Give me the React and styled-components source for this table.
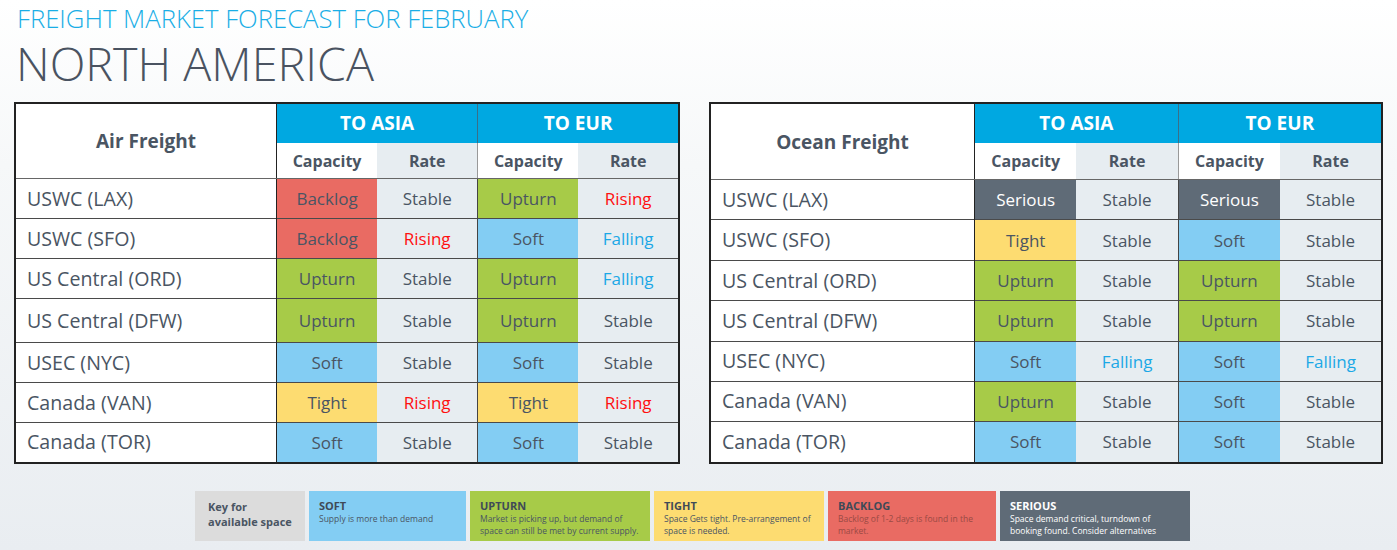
import React from 'react';
import styled, { createGlobalStyle } from 'styled-components';

const GlobalStyle = createGlobalStyle`
  html, body {
    margin: 0;
    padding: 0;
  }
  body {
    width: 1397px;
    height: 550px;
    overflow: hidden;
    font-family: "Open Sans", "Liberation Sans", sans-serif;
    background: linear-gradient(180deg, #ffffff 0%, #f6f8f9 30%, #e9edf1 100%);
  }
`;

const COLORS = {
  Soft: '#83cdf3',
  Upturn: '#a7cb48',
  Tight: '#fddc71',
  Backlog: '#e96b63',
  Serious: '#5f6b77',
};

const RATE_COLORS = {
  Stable: '#4a5563',
  Rising: '#ff1010',
  Falling: '#1ca8e6',
};

const Page = styled.div`
  padding: 4px 0 0 14px;
  color: #4a5563;
`;

const Kicker = styled.div`
  font-size: 25.7px;
  font-weight: 300;
  line-height: 30px;
  color: #1aaee6;
  padding-left: 3px;
`;

const Title = styled.h1`
  margin: 0;
  font-size: 46.7px;
  font-weight: 300;
  line-height: 58px;
  color: #4a5361;
  padding-left: 2px;
`;

const Tables = styled.div`
  display: flex;
  gap: 29px;
  margin-top: 10px;
`;

const Table = styled.table`
  border-collapse: collapse;
  width: ${(p) => p.$width}px;
  border: 2px solid #222;
  table-layout: fixed;
  background: #fff;
`;

const LabelHead = styled.th`
  width: ${(p) => p.$width}px;
  font-size: 19px;
  font-weight: 700;
  color: #4a5563;
  border-right: 1.5px solid #222;
  border-bottom: 1px solid #666;
  text-align: center;
`;

const GroupHead = styled.th`
  background: #00a8e1;
  color: #fff;
  font-size: 19px;
  font-weight: 700;
  height: 39px;
  line-height: 1;
  padding: 0;
  border-left: ${(p) => (p.$first ? 'none' : '1px solid #3a6f88')};
`;

const SubHead = styled.th`
  height: ${(p) => p.$h}px;
  line-height: 1;
  padding: 0;
  font-size: 16px;
  font-weight: 700;
  color: #4a5563;
  background: ${(p) => (p.$rate ? '#e7edf1' : '#ffffff')};
  border-bottom: 1px solid #666;
  border-left: ${(p) => (p.$divider ? '1px solid #999' : 'none')};
`;

const Row = styled.tr`
  height: ${(p) => p.$h}px;
  border-top: 1px solid #4a4a4a;
`;

const Label = styled.td`
  font-size: 19.6px;
  line-height: 1;
  color: #4a5563;
  padding: 0 0 0 11px;
  border-right: 1.5px solid #222;
  white-space: nowrap;
`;

const Cell = styled.td`
  padding: 0;
  line-height: 1;
  text-align: center;
  font-size: 17px;
  background: ${(p) => p.$bg};
  color: ${(p) => p.$color};
  border-left: ${(p) => (p.$divider ? '1px solid #444' : 'none')};
`;

const Legend = styled.div`
  display: flex;
  gap: 4px;
  margin: 27px 0 0 181px;
`;

const KeyBox = styled.div`
  width: 110px;
  height: 50px;
  box-sizing: border-box;
  background: #dcdcdc;
  padding: 8px 0 0 13px;
  font-size: 11px;
  font-weight: 700;
  line-height: 15px;
  color: #4a5563;
`;

const LegendItem = styled.div`
  width: ${(p) => p.$width}px;
  height: 50px;
  box-sizing: border-box;
  background: ${(p) => p.$bg};
  padding: 8px 0 0 10px;
  color: ${(p) => (p.$dark ? '#ffffff' : '#4a5563')};
`;

const LegendTitle = styled.div`
  font-size: 11px;
  font-weight: 700;
  line-height: 13px;
  color: ${(p) => (p.$dark ? '#ffffff' : '#3f4a57')};
`;

const LegendText = styled.div`
  font-size: 8.5px;
  line-height: 12px;
  margin-top: 1px;
  color: ${(p) => (p.$muted ? '#9a4a44' : 'inherit')};
`;

const airRows = [
  ['USWC (LAX)', 'Backlog', 'Stable', 'Upturn', 'Rising', 40],
  ['USWC (SFO)', 'Backlog', 'Rising', 'Soft', 'Falling', 40],
  ['US Central (ORD)', 'Upturn', 'Stable', 'Upturn', 'Falling', 40],
  ['US Central (DFW)', 'Upturn', 'Stable', 'Upturn', 'Stable', 44],
  ['USEC (NYC)', 'Soft', 'Stable', 'Soft', 'Stable', 40],
  ['Canada (VAN)', 'Tight', 'Rising', 'Tight', 'Rising', 40],
  ['Canada (TOR)', 'Soft', 'Stable', 'Soft', 'Stable', 40],
];

const oceanRows = [
  ['USWC (LAX)', 'Serious', 'Stable', 'Serious', 'Stable', 40],
  ['USWC (SFO)', 'Tight', 'Stable', 'Soft', 'Stable', 41],
  ['US Central (ORD)', 'Upturn', 'Stable', 'Upturn', 'Stable', 40],
  ['US Central (DFW)', 'Upturn', 'Stable', 'Upturn', 'Stable', 40],
  ['USEC (NYC)', 'Soft', 'Falling', 'Soft', 'Falling', 40],
  ['Canada (VAN)', 'Upturn', 'Stable', 'Soft', 'Stable', 40],
  ['Canada (TOR)', 'Soft', 'Stable', 'Soft', 'Stable', 41],
];

const legend = [
  { title: 'SOFT', text: ['Supply is more than demand'], bg: COLORS.Soft, width: 157 },
  {
    title: 'UPTURN',
    text: ['Market is picking  up, but demand of', 'space can still be met by current supply.'],
    bg: COLORS.Upturn,
    width: 180,
  },
  {
    title: 'TIGHT',
    text: ['Space Gets tight. Pre-arrangement of', 'space is needed.'],
    bg: COLORS.Tight,
    width: 170,
  },
  {
    title: 'BACKLOG',
    text: ['Backlog of 1-2 days is found in the', 'market.'],
    bg: COLORS.Backlog,
    width: 168,
    muted: true,
  },
  {
    title: 'SERIOUS',
    text: ['Space demand critical, turndown of', 'booking found. Consider alternatives'],
    bg: COLORS.Serious,
    width: 190,
    dark: true,
  },
];

const CapacityCell = ({ value, divider }) => (
  <Cell $bg={COLORS[value]} $color={value === 'Serious' ? '#ffffff' : '#4a5563'} $divider={divider}>
    {value}
  </Cell>
);

const RateCell = ({ value }) => (
  <Cell $bg="#e7edf1" $color={RATE_COLORS[value]}>
    {value}
  </Cell>
);

const FreightTable = ({ title, rows, width, labelWidth, subHeight }) => (
  <Table $width={width}>
    <thead>
      <tr>
        <LabelHead rowSpan={2} $width={labelWidth}>
          {title}
        </LabelHead>
        <GroupHead colSpan={2} $first>
          TO ASIA
        </GroupHead>
        <GroupHead colSpan={2}>TO EUR</GroupHead>
      </tr>
      <tr>
        <SubHead $h={subHeight}>Capacity</SubHead>
        <SubHead $h={subHeight} $rate>Rate</SubHead>
        <SubHead $h={subHeight} $divider>Capacity</SubHead>
        <SubHead $h={subHeight} $rate>Rate</SubHead>
      </tr>
    </thead>
    <tbody>
      {rows.map(([label, c1, r1, c2, r2, h]) => (
        <Row key={label} $h={h}>
          <Label>{label}</Label>
          <CapacityCell value={c1} />
          <RateCell value={r1} />
          <CapacityCell value={c2} divider />
          <RateCell value={r2} />
        </Row>
      ))}
    </tbody>
  </Table>
);

export default function App() {
  return (
    <Page>
      <GlobalStyle />
      <Kicker>FREIGHT MARKET FORECAST FOR FEBRUARY</Kicker>
      <Title>NORTH AMERICA</Title>
      <Tables>
        <FreightTable title="Air Freight" rows={airRows} width={666} labelWidth={258} subHeight={35} />
        <FreightTable title="Ocean Freight" rows={oceanRows} width={674} labelWidth={261} subHeight={36} />
      </Tables>
      <Legend>
        <KeyBox>
          Key for
          <br />
          available space
        </KeyBox>
        {legend.map((item) => (
          <LegendItem key={item.title} $bg={item.bg} $width={item.width} $dark={item.dark}>
            <LegendTitle $dark={item.dark}>{item.title}</LegendTitle>
            <LegendText $muted={item.muted}>
              {item.text.map((line, i) => (
                <div key={i}>{line}</div>
              ))}
            </LegendText>
          </LegendItem>
        ))}
      </Legend>
    </Page>
  );
}
